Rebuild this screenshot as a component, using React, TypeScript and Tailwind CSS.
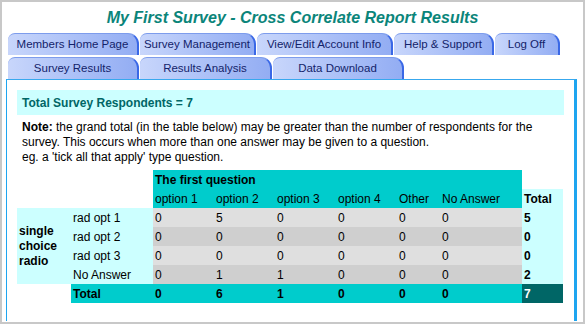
const topTabs = [
  { label: 'Members Home Page', w: 'w-[131px]' },
  { label: 'Survey Management', w: 'w-[116px]' },
  { label: 'View/Edit Account Info', w: 'w-[136px]' },
  { label: 'Help & Support', w: 'w-[100px]' },
  { label: 'Log Off', w: 'w-[65px]' },
];

const subTabs = [
  { label: 'Survey Results', w: 'w-[131px]' },
  { label: 'Results Analysis', w: 'w-[132px]' },
  { label: 'Data Download', w: 'w-[131px]' },
];

const options = ['option 1', 'option 2', 'option 3', 'option 4', 'Other', 'No Answer'];
const colW = ['w-[61px]', 'w-[61px]', 'w-[61px]', 'w-[61px]', 'w-[43px]', 'w-[82px]'];

const rows = [
  { label: 'rad opt 1', values: [0, 5, 0, 0, 0, 0], total: 5 },
  { label: 'rad opt 2', values: [0, 0, 0, 0, 0, 0], total: 0 },
  { label: 'rad opt 3', values: [0, 0, 0, 0, 0, 0], total: 0 },
  { label: 'No Answer', values: [0, 1, 1, 0, 0, 0], total: 2 },
];

const totals = [0, 6, 1, 0, 0, 0];

function Tab({ label, w }: { label: string; w: string }) {
  return (
    <div
      className={`${w} h-[22px] shrink-0 flex items-center justify-center rounded-tl-[7px] rounded-tr-[11px] border-t border-r-2 border-t-[#7d9cec] border-r-[#3a68e6] bg-gradient-to-r from-[#c8d6fb] to-[#93adf3] text-[11.5px] text-[#13236a]`}
    >
      {label}
    </div>
  );
}

export default function App() {
  return (
    <div className="w-[585px] h-[324px] border-2 border-[#c8c8c8] bg-white font-['Liberation_Sans',Arial,sans-serif] overflow-hidden">
      {/* page title */}
      <h1 className="h-[31px] pt-[6px] text-center text-[16px] leading-[20px] font-bold italic text-[#0b857a]">
        My First Survey - Cross Correlate Report Results
      </h1>

      {/* tab rows */}
      <div className="pl-[6px] flex gap-[1px]">
        {topTabs.map((t) => (
          <Tab key={t.label} {...t} />
        ))}
      </div>
      <div className="pl-[6px] mt-[2px] flex gap-[1px]">
        {subTabs.map((t) => (
          <Tab key={t.label} {...t} />
        ))}
      </div>

      {/* content panel */}
      <div className="ml-[4px] w-[571px] h-[242px] border-t border-l border-r-[3px] border-t-[#38a8ee] border-l-[#1ea5f0] border-r-[#1ea5f0] px-[10px] pt-[10px]">
        <div className="h-[25px] bg-[#ccffff] pl-[5px] flex items-center text-[12px] font-bold text-[#006666]">
          Total Survey Respondents = 7
        </div>

        <div className="mt-[5px] pl-[5px] text-[12px] leading-[15px] text-black whitespace-nowrap">
          <div>
            <span className="font-bold">Note:</span>{' '}
            <span>the grand total (in the table below) may be greater than the number of respondents for the</span>
          </div>
          <div>survey. This occurs when more than one answer may be given to a question.</div>
          <div>eg. a 'tick all that apply' type question.</div>
        </div>

        <table className="mt-[5px] border-collapse text-[12px] text-black">
          <tbody>
            <tr className="h-[19px]">
              <td className="w-[54px] p-0" />
              <td className="w-[82px] p-0" />
              <td colSpan={6} className="bg-[#00cccc] px-[2px] font-bold">
                The first question
              </td>
              <td className="w-[41px] p-0" />
            </tr>
            <tr className="h-[19px]">
              <td className="p-0" />
              <td className="p-0" />
              {options.map((o, i) => (
                <td key={o} className={`${colW[i]} bg-[#00cccc] px-[2px] whitespace-nowrap`}>
                  {o}
                </td>
              ))}
              <td className="bg-[#ccffff] px-[2px] font-bold">Total</td>
            </tr>
            {rows.map((r, ri) => (
              <tr key={r.label} className="h-[19px]">
                {ri === 0 && (
                  <td rowSpan={4} className="bg-[#ccffff] px-[2px] font-bold leading-[15px] align-middle">
                    single
                    <br />
                    choice
                    <br />
                    radio
                  </td>
                )}
                <td className="bg-[#ccffff] px-[2px] whitespace-nowrap">{r.label}</td>
                {r.values.map((v, i) => (
                  <td key={i} className={`px-[2px] ${ri % 2 === 0 ? 'bg-[#dfdfdf]' : 'bg-[#cfcfcf]'}`}>
                    {v}
                  </td>
                ))}
                <td className="bg-[#ccffff] px-[2px] font-bold">{r.total}</td>
              </tr>
            ))}
            <tr className="h-[19px] font-bold">
              <td className="p-0" />
              <td className="bg-[#00cccc] px-[2px]">Total</td>
              {totals.map((v, i) => (
                <td key={i} className="bg-[#00cccc] px-[2px]">
                  {v}
                </td>
              ))}
              <td className="bg-[#006666] px-[2px] text-white">7</td>
            </tr>
          </tbody>
        </table>
      </div>
    </div>
  );
}
